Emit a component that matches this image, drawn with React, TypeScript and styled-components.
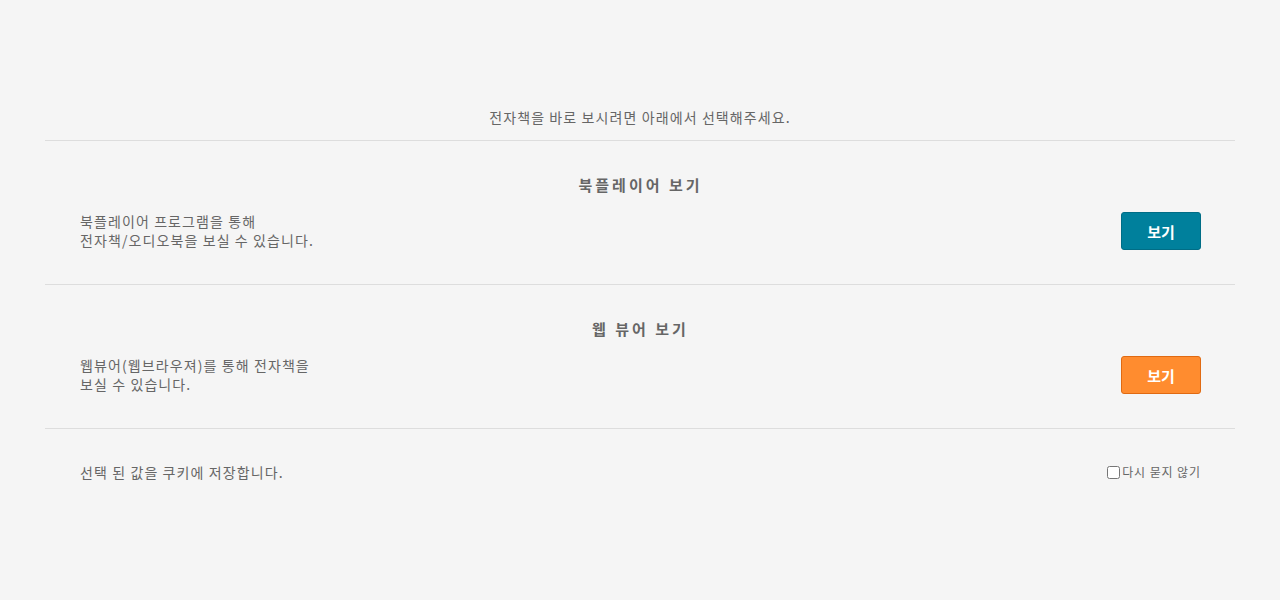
import React from "react";
import styled, { createGlobalStyle } from "styled-components";

const Global = createGlobalStyle`
  html, body { margin: 0; padding: 0; background: #f5f5f5; }
  body { font-family: "Noto Sans CJK KR", "Noto Sans", sans-serif; color: #666; }
`;

const Page = styled.div`
  padding: 107px 45px 0;
`;

const Intro = styled.p`
  margin: 0;
  padding-bottom: 13px;
  text-align: center;
  font-size: 14px;
  line-height: 20px;
  letter-spacing: 1.1px;
  color: #666;
  border-bottom: 1px solid #dddddd;
`;

const Section = styled.section`
  padding: 34px 34px 34px 35px;
  border-bottom: 1px solid #dddddd;
`;

const Title = styled.h2`
  margin: 0 0 17px;
  text-align: center;
  font-size: 15px;
  line-height: 20px;
  font-weight: 700;
  color: #666;
  letter-spacing: 3px;
`;

const Row = styled.div`
  display: flex;
  align-items: center;
  justify-content: space-between;
`;

const Desc = styled.p`
  margin: 0;
  font-size: 14px;
  line-height: 19px;
  letter-spacing: 1.1px;
  color: #666;
`;

const ViewButton = styled.button<{ $variant: "teal" | "orange" }>`
  width: 80px;
  height: 38px;
  border-radius: 3px;
  font-family: inherit;
  font-size: 15px;
  font-weight: 700;
  color: #fff;
  cursor: pointer;
  background: ${(p) => (p.$variant === "teal" ? "#00809c" : "#ff8c2f")};
  border: 1px solid ${(p) => (p.$variant === "teal" ? "#006d86" : "#e06a12")};
`;

const Footer = styled.div`
  display: flex;
  align-items: center;
  justify-content: space-between;
  padding: 32px 34px 0 35px;
`;

const Note = styled.span`
  font-size: 14px;
  line-height: 20px;
  letter-spacing: 1.1px;
  color: #666;
`;

const Check = styled.label`
  display: flex;
  align-items: center;
  font-size: 12px;
  letter-spacing: 0.9px;
  color: #666;
  line-height: 20px;
  padding-top: 1px;
  input {
    margin: 0 2px 0 0;
    width: 13px;
    height: 13px;
  }
`;

export default function App() {
  return (
    <>
      <Global />
      <Page>
        <Intro>전자책을 바로 보시려면 아래에서 선택해주세요.</Intro>
        <Section>
          <Title>북플레이어 보기</Title>
          <Row>
            <Desc>
              북플레이어 프로그램을 통해
              <br />
              전자책/오디오북을 보실 수 있습니다.
            </Desc>
            <ViewButton $variant="teal">보기</ViewButton>
          </Row>
        </Section>
        <Section>
          <Title>웹 뷰어 보기</Title>
          <Row>
            <Desc>
              웹뷰어(웹브라우져)를 통해 전자책을
              <br />
              보실 수 있습니다.
            </Desc>
            <ViewButton $variant="orange">보기</ViewButton>
          </Row>
        </Section>
        <Footer>
          <Note>선택 된 값을 쿠키에 저장합니다.</Note>
          <Check>
            <input type="checkbox" />
            다시 묻지 않기
          </Check>
        </Footer>
      </Page>
    </>
  );
}
